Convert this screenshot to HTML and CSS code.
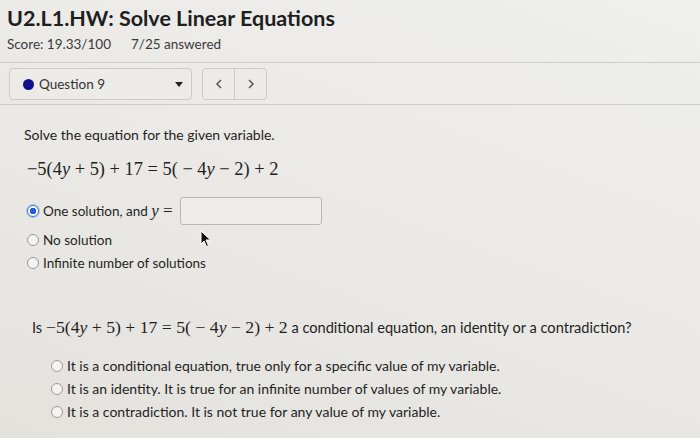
FILE: index.html
```html
<!DOCTYPE html>
<html>
<head>
<meta charset="utf-8">
<link rel="stylesheet" href="styles.css">
</head>
<body>
<div class="page">
  <header class="head">
    <h1 class="title">U2.L1.HW: Solve Linear Equations</h1>
    <div class="score"><span>Score: 19.33/100</span><span>7/25 answered</span></div>
  </header>
  <div class="navbar">
    <div class="qselect">
      <span class="dot"></span>
      <span class="qlabel">Question 9</span>
      <span class="caret"></span>
    </div>
    <div class="pager">
      <div class="pbtn">
        <svg width="8" height="10" viewBox="0 0 8 10"><path d="M6 1 L2 5 L6 9" fill="none" stroke="#555" stroke-width="1.5"/></svg>
      </div>
      <div class="pbtn">
        <svg width="8" height="10" viewBox="0 0 8 10"><path d="M2 1 L6 5 L2 9" fill="none" stroke="#555" stroke-width="1.5"/></svg>
      </div>
    </div>
  </div>
  <section class="q1">
    <p class="prompt">Solve the equation for the given variable.</p>
    <p class="math eq">−5(4<i>y</i> + 5) + 17 = 5( − 4<i>y</i> − 2) + 2</p>
    <div class="opts">
      <label class="opt first"><span class="radio on"></span><span>One solution, and <span class="math"><i>y</i> =</span></span><span class="answer"></span></label>
      <label class="opt"><span class="radio"></span><span>No solution</span></label>
      <label class="opt"><span class="radio"></span><span>Infinite number of solutions</span></label>
    </div>
    <svg class="cursor" width="12" height="18" viewBox="0 0 12 18"><path d="M1 1 L1 14 L4 11 L6.5 16.5 L8.5 15.5 L6 10 L10.5 10 Z" fill="#111" stroke="#fff" stroke-width="1"/></svg>
  </section>
  <section class="q2">
    <p class="prompt2">Is <span class="math">−5(4<i>y</i> + 5) + 17 = 5( − 4<i>y</i> − 2) + 2</span> a conditional equation, an identity or a contradiction?</p>
    <div class="opts2">
      <label class="opt"><span class="radio"></span><span>It is a conditional equation, true only for a specific value of my variable.</span></label>
      <label class="opt"><span class="radio"></span><span>It is an identity. It is true for an infinite number of values of my variable.</span></label>
      <label class="opt"><span class="radio"></span><span>It is a contradiction. It is not true for any value of my variable.</span></label>
    </div>
  </section>
</div>
</body>
</html>
```
FILE: styles.css
```css
html, body {
  margin: 0;
  padding: 0;
}
body {
  width: 700px;
  height: 438px;
  overflow: hidden;
  background: linear-gradient(200deg, #efefed 0%, #eae9e6 50%, #e4e2dd 100%);
  font-family: "Lato", "Open Sans", sans-serif;
  color: #1f1f1f;
}
.page {
  position: relative;
}
.head {
  padding: 4px 0 0 7px;
}
.title {
  margin: 0;
  font-size: 21.5px;
  font-weight: 700;
  color: #1e1e1e;
  line-height: 28px;
}
.score {
  display: flex;
  gap: 20px;
  font-size: 13.5px;
  color: #3a3a3a;
  margin-top: 2px;
  line-height: 20px;
}
.navbar {
  margin-top: 8px;
  border-top: 1px solid #cfcdca;
  border-bottom: 1px solid #cfcdca;
  padding: 5px 0 3px 9px;
  display: flex;
  gap: 10px;
  height: 33px;
}
.qselect {
  width: 183px;
  height: 32px;
  box-sizing: border-box;
  border: 1px solid #cdcbc7;
  border-radius: 4px;
  background: #ecebe8;
  display: flex;
  align-items: center;
  padding-left: 13px;
}
.dot {
  width: 11px;
  height: 11px;
  border-radius: 50%;
  background: #10108a;
  margin-right: 5px;
}
.qlabel {
  font-size: 13.5px;
  color: #333;
  flex: 1;
}
.caret {
  width: 0;
  height: 0;
  border-left: 4px solid transparent;
  border-right: 4px solid transparent;
  border-top: 5px solid #222;
  margin-right: 8px;
}
.pager {
  display: flex;
  border: 1px solid #cdcbc7;
  border-radius: 4px;
  height: 32px;
  box-sizing: border-box;
  background: #ecebe8;
}
.pbtn {
  width: 31px;
  display: flex;
  align-items: center;
  justify-content: center;
}
.pbtn + .pbtn {
  border-left: 1px solid #cdcbc7;
}
.q1 {
  position: relative;
  padding: 20px 0 0 24px;
}
.prompt {
  margin: 0;
  font-size: 14px;
  line-height: 20px;
}
.math {
  font-family: "Liberation Serif", "DejaVu Serif", serif;
  font-size: 18.4px;
}
.eq {
  margin: 13px 0 0 3px;
  line-height: 22px;
}
.opts {
  margin-top: 14px;
  display: flex;
  flex-direction: column;
}
.opt {
  display: flex;
  align-items: center;
  font-size: 14px;
  height: 23px;
}
.q1 .opt {
  padding-left: 3px;
  font-size: 13.5px;
}
.opt.first {
  height: 34px;
}
.opt.first .math {
  font-size: 17px;
}
.radio {
  width: 10px;
  height: 10px;
  border-radius: 50%;
  border: 1px solid #9a9a9a;
  background: #f4f4f2;
  margin-right: 4px;
  flex: none;
}
.radio.on {
  border: 1px solid #3d6fd6;
  background: radial-gradient(circle, #1f5fe0 0 3px, #fff 3.5px);
  box-shadow: 0 0 0 1px #aac4f2;
}
.answer {
  width: 142px;
  height: 28px;
  box-sizing: border-box;
  border: 1px solid #b9b7b3;
  border-radius: 3px;
  background: #eeede9;
  margin-left: 7px;
}
.cursor {
  position: absolute;
  left: 200px;
  top: 125px;
}
.q2 {
  padding: 42px 0 0 32px;
}
.prompt2 {
  margin: 0;
  font-size: 14.6px;
  line-height: 22px;
}
.prompt2 .math {
  font-size: 17.7px;
}
.opts2 {
  margin-top: 15px;
  padding-left: 19px;
  display: flex;
  flex-direction: column;
}
```
